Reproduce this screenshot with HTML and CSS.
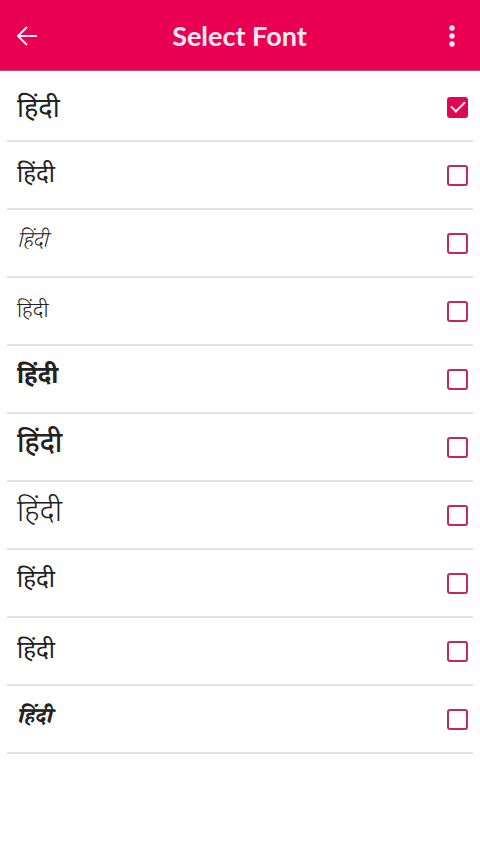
FILE: index.html
```html
<!DOCTYPE html>
<html lang="hi">
<head>
<meta charset="utf-8">
<meta name="viewport" content="width=device-width, initial-scale=1">
<title>Select Font</title>
<link rel="stylesheet" href="styles.css">
</head>
<body>
<header class="bar">
<button class="icon-button" type="button" aria-label="Back"><svg width="20" height="20" viewBox="0 0 20 20"><path d="M20 10H2M10 1L1 10l9 9"/></svg></button>
<h1 class="title">Select Font</h1>
<button class="icon-button" type="button" aria-label="Menu"><svg class="dots" width="6" height="22" viewBox="0 0 6 22"><circle cx="3" cy="3" r="2.7"/><circle cx="3" cy="11" r="2.7"/><circle cx="3" cy="19" r="2.7"/></svg></button>
</header>
<main class="list">
<label class="row large"><span class="sample">हिंदी</span><input class="check" type="checkbox" checked></label>
<label class="row medium"><span class="sample">हिंदी</span><input class="check" type="checkbox"></label>
<label class="row slanted"><span class="sample">हिंदी</span><input class="check" type="checkbox"></label>
<label class="row small"><span class="sample">हिंदी</span><input class="check" type="checkbox"></label>
<label class="row bold raised"><span class="sample">हिंदी</span><input class="check" type="checkbox"></label>
<label class="row strong raised"><span class="sample">हिंदी</span><input class="check" type="checkbox"></label>
<label class="row light"><span class="sample">हिंदी</span><input class="check" type="checkbox"></label>
<label class="row medium raised"><span class="sample">हिंदी</span><input class="check" type="checkbox"></label>
<label class="row medium"><span class="sample">हिंदी</span><input class="check" type="checkbox"></label>
<label class="row slanted heavy"><span class="sample">हिंदी</span><input class="check" type="checkbox"></label>
</main>
</body>
</html>
```

FILE: styles.css
```css
* { box-sizing: border-box; }
body { margin: 0; background: #fff; color: #222; font-family: "Noto Sans Devanagari", "Noto Sans", sans-serif; }
.bar { display: flex; align-items: center; justify-content: space-between; height: 71px; padding: 2px 8px 0 7px; background: #e90052; color: #ffeaf2; border-bottom: 1px solid #b9507a; }
.title { margin: 0; font: 700 27px/32px Lato, sans-serif; }
.icon-button { display: grid; place-items: center; width: 40px; height: 40px; padding: 0; border: 0; background: none; color: inherit; }
.icon-button svg { fill: none; stroke: currentColor; stroke-width: 2; }
.icon-button .dots { fill: currentColor; stroke: none; }
.list { padding: 3px 7px; }
.row { display: flex; align-items: center; justify-content: space-between; height: 68px; padding: 0 5px 0 10px; border-bottom: 2px solid #e4e4e4; }
.sample { padding-top: 2px; font-size: 27px; line-height: 40px; }
.large .sample { padding-top: 8px; }
.medium .sample { font-size: 24px; }
.slanted .sample { font-family: "Noto Serif Devanagari", "Noto Sans Devanagari", serif; font-size: 22px; font-style: italic; font-weight: 300; }
.small .sample { font-size: 21px; font-weight: 300; }
.bold .sample { font-size: 24px; font-weight: 700; }
.strong .sample { font-size: 28px; font-weight: 500; }
.light .sample { padding: 0 0 2px; font-size: 30px; font-weight: 300; }
.heavy .sample { font-weight: 800; }
.raised .sample { padding: 0 0 5px; }
.check { appearance: none; display: grid; place-items: center; width: 21px; height: 21px; margin: 0; border: 2px solid #c02a5c; border-radius: 3px; }
.check:checked { background: #e00852; border-color: #e00852; }
.check:checked::after { content: ""; width: 12px; height: 6px; margin-bottom: 4px; border: solid #ffe4ee; border-width: 0 0 2px 2px; transform: rotate(-45deg); }
```
